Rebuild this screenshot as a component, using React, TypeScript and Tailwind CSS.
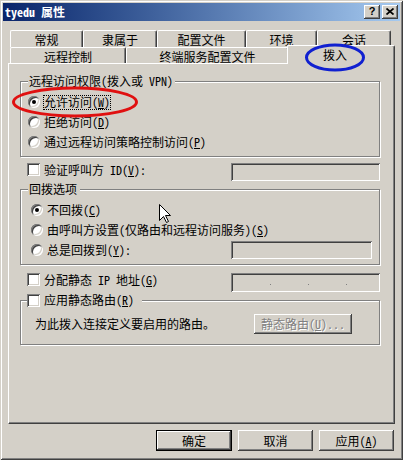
import React from "react";

const raised =
  "shadow-[inset_-1px_-1px_#404040,inset_1px_1px_#ffffff,inset_-2px_-2px_#808080,inset_2px_2px_#d4d0c8]";
const sunken =
  "shadow-[inset_1px_1px_#808080,inset_-1px_-1px_#ffffff,inset_2px_2px_#404040,inset_-2px_-2px_#d4d0c8]";

function Radio({ checked }: { checked?: boolean }) {
  return (
    <span
      className={
        "w-[12px] h-[12px] shrink-0 rounded-full bg-white flex items-center justify-center " +
        sunken
      }
    >
      {checked && <span className="w-[4px] h-[4px] rounded-full bg-black" />}
    </span>
  );
}

function Check() {
  return <span className={"w-[13px] h-[13px] shrink-0 bg-white " + sunken} />;
}

function Field({ className, children }: { className?: string; children?: React.ReactNode }) {
  return <div className={"bg-[#d4d0c8] " + sunken + " " + (className || "")}>{children}</div>;
}

function Group({
  legend,
  className,
  children,
}: {
  legend: React.ReactNode;
  className?: string;
  children?: React.ReactNode;
}) {
  return (
    <div
      className={
        "relative border border-[#808080] shadow-[1px_1px_0_#ffffff,inset_1px_1px_0_#ffffff] " +
        (className || "")
      }
    >
      <div className="absolute -top-[7px] left-[7px] h-[12px] bg-[#d4d0c8] flex items-center">{legend}</div>
      {children}
    </div>
  );
}

function RadioRow({
  checked,
  focus,
  children,
  right,
}: {
  checked?: boolean;
  focus?: boolean;
  children: React.ReactNode;
  right?: React.ReactNode;
}) {
  return (
    <div className="flex items-center h-[20px]">
      <Radio checked={checked} />
      <span
        className={
          "ml-[3px] h-[15px] flex items-center whitespace-nowrap border " +
          (focus ? "border-dotted border-black" : "border-transparent")
        }
      >
        {children}
      </span>
      {right}
    </div>
  );
}

function Tab({ w, children, className }: { w: string; children: React.ReactNode; className?: string }) {
  return (
    <div
      className={
        "shrink-0 flex justify-center border-l border-t border-r border-white border-r-[#404040] rounded-tl-[2px] rounded-tr-[2px] shadow-[inset_-1px_0_#808080] " +
        w +
        " " +
        (className || "")
      }
    >
      {children}
    </div>
  );
}

function Btn({
  w,
  children,
  def,
  disabled,
  className,
}: {
  w: string;
  children: React.ReactNode;
  def?: boolean;
  disabled?: boolean;
  className?: string;
}) {
  return (
    <div className={"shrink-0 " + w + " " + (def ? "border border-black" : "") + " " + (className || "")}>
      <div
        className={
          "w-full h-full flex items-center justify-center " +
          raised +
          " " +
          (disabled ? "text-[#808080] [text-shadow:1px_1px_0_#ffffff]" : "")
        }
      >
        {children}
      </div>
    </div>
  );
}

export default function App() {
  return (
    <div
      className={
        "relative w-[403px] h-[460px] overflow-hidden bg-[#d4d0c8] text-black text-[12px] leading-[12px] font-['Noto_Sans_Mono_CJK_SC','Noto_Sans_CJK_SC',sans-serif] p-[3px] flex flex-col shadow-[inset_1px_1px_#d4d0c8,inset_-1px_-1px_#404040,inset_2px_2px_#ffffff,inset_-2px_-2px_#808080]"
      }
    >
      {/* Title bar */}
      <div className="h-[18px] shrink-0 bg-linear-to-r from-[#0a246a] to-[#a6caf0] flex items-center pl-[2px] pr-[2px]">
        <span className="text-white font-bold whitespace-nowrap">tyedu 属性</span>
        <div className="ml-auto flex">
          <div className={"w-[16px] h-[14px] bg-[#d4d0c8] flex items-center justify-center " + raised}>
            <span className="font-['Liberation_Sans',sans-serif] font-bold text-[11px] leading-[11px] -mt-[1px]">?</span>
          </div>
          <div className={"ml-[2px] w-[16px] h-[14px] bg-[#d4d0c8] flex items-center justify-center " + raised}>
            <svg width="8" height="7" viewBox="0 0 8 7" className="-mt-[1px]">
              <path d="M0.5 0.5 L7.5 6.5 M7.5 0.5 L0.5 6.5" stroke="#000" strokeWidth="1.7" />
            </svg>
          </div>
        </div>
      </div>

      <div className="flex flex-col px-[5px]">
        {/* Tabs */}
        <div className="mt-[9px] ml-[2px] flex flex-col">
          <div className="flex h-[17px]">
            <Tab w="w-[73px]" className="pt-[3px]">常规</Tab>
            <Tab w="w-[74px]" className="pt-[3px]">隶属于</Tab>
            <Tab w="w-[89px]" className="pt-[3px]">配置文件</Tab>
            <Tab w="w-[71px]" className="pt-[3px]">环境</Tab>
            <Tab w="w-[74px]" className="pt-[3px]">会话</Tab>
          </div>
          <div className="flex h-[16px] items-start">
            <Tab w="w-[116px] h-[16px]" className="pt-[3px]">远程控制</Tab>
            <Tab w="w-[163px] h-[16px]" className="pt-[3px]">终端服务配置文件</Tab>
            <Tab
              w="w-[108px] h-[19px]"
              className="relative z-10 -mt-[2px] -ml-[2px] bg-[#d4d0c8] pt-[3px] pr-[12px] shadow-[inset_-1px_0_#808080]"
            >
              拨入
            </Tab>
          </div>
        </div>

        {/* Panel */}
        <div className="h-[361px] border border-white border-r-[#404040] border-b-[#404040] shadow-[inset_-1px_-1px_#808080] pl-[11px] pr-[14px] flex flex-col">
          <Group
            className="mt-[17px] pt-[10px] pb-[4px] pl-[7px]"
            legend={<span className="px-[1px] pr-[2px] whitespace-nowrap">远程访问权限(拨入或 VPN)</span>}
          >
            <RadioRow checked focus>
              允许访问(<u>W</u>)
            </RadioRow>
            <RadioRow>
              拒绝访问(<u>D</u>)
            </RadioRow>
            <RadioRow>
              通过远程访问策略控制访问(<u>P</u>)
            </RadioRow>
          </Group>

          <div className="mt-[6px] flex items-start h-[18px]">
            <div className="ml-[7px] flex items-center h-[13px]">
              <Check />
              <span className="ml-[4px] whitespace-nowrap">
                验证呼叫方 ID(<u>V</u>):
              </span>
            </div>
            <Field className="ml-auto w-[149px] h-[18px]" />
          </div>

          <Group
            className="mt-[8px] pt-[10px] pb-[4px] pl-[10px]"
            legend={<span className="px-[1px] pr-[3px] whitespace-nowrap">回拨选项</span>}
          >
            <RadioRow checked>
              不回拨(<u>C</u>)
            </RadioRow>
            <RadioRow>
              由呼叫方设置(仅路由和远程访问服务)(<u>S</u>)
            </RadioRow>
            <RadioRow right={<Field className="ml-auto mr-[7px] w-[141px] h-[18px]" />}>
              总是回拨到(<u>Y</u>):
            </RadioRow>
          </Group>

          <div className="mt-[8px] flex items-start h-[19px]">
            <div className="ml-[7px] flex items-center h-[13px]">
              <Check />
              <span className="ml-[4px] whitespace-nowrap">
                分配静态 IP 地址(<u>G</u>)
              </span>
            </div>
            <Field className="ml-auto w-[149px] h-[19px] flex pl-[39px] pt-[11px] gap-[37px]">
              <span className="w-[1px] h-[1px] bg-[#808080]" />
              <span className="w-[1px] h-[1px] bg-[#808080]" />
              <span className="w-[1px] h-[1px] bg-[#808080]" />
            </Field>
          </div>

          <Group
            className="mt-[8px] pt-[13px] pb-[10px] pl-[14px]"
            legend={
              <span className="-ml-[1px] flex items-center pr-[8px] whitespace-nowrap">
                <Check />
                <span className="ml-[4px]">
                  应用静态路由(<u>R</u>)
                </span>
              </span>
            }
          >
            <div className="flex items-center h-[20px]">
              <span className="whitespace-nowrap">为此拨入连接定义要启用的路由。</span>
              <Btn w="w-[98px] h-[20px]" disabled className="ml-auto mr-[27px]">
                静态路由(<u>U</u>)...
              </Btn>
            </div>
          </Group>
        </div>

        {/* Bottom buttons */}
        <div className="mt-[6px] flex justify-end gap-[6px] pr-[1px]">
          <Btn w="w-[76px] h-[21px]" def>
            确定
          </Btn>
          <Btn w="w-[75px] h-[21px]">取消</Btn>
          <Btn w="w-[75px] h-[21px]">
            应用(<u>A</u>)
          </Btn>
        </div>
      </div>

      {/* Annotations and cursor */}
      <svg
        className="absolute left-0 top-0 z-20 pointer-events-none"
        width="403"
        height="460"
        viewBox="0 0 403 460"
      >
        <ellipse cx="75" cy="102" rx="61.5" ry="14" fill="none" stroke="#e01010" strokeWidth="3" />
        <ellipse cx="335" cy="57.5" rx="28.5" ry="12.5" fill="none" stroke="#1020d0" strokeWidth="3" />
        <polygon
          points="159.5,204.5 159.5,220.5 163.5,216.5 166.5,222.5 168.5,221.5 165.5,215.5 170.5,215.5"
          fill="#ffffff"
          stroke="#000000"
          strokeWidth="1"
        />
      </svg>
    </div>
  );
}
